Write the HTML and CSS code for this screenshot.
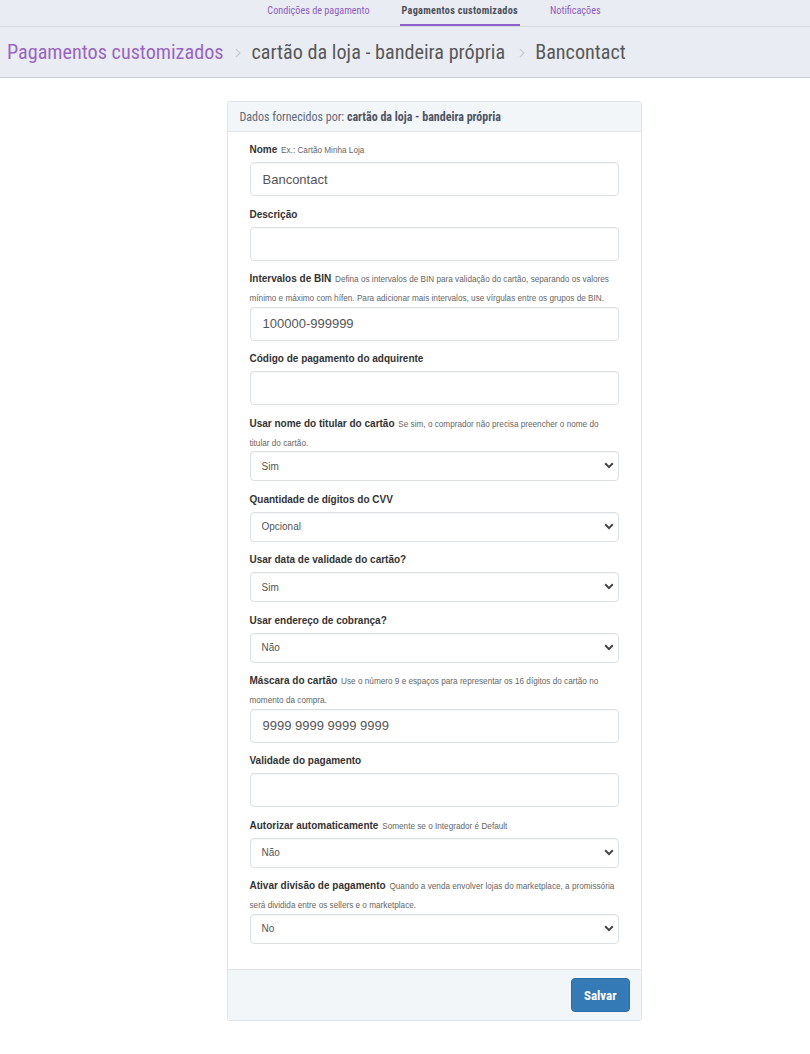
FILE: index.html
```html
<!DOCTYPE html>
<html lang="pt-BR">
<head>
<meta charset="utf-8">
<title>Pagamentos customizados - Bancontact</title>
<link rel="stylesheet" href="styles.css">
</head>
<body>
<nav class="tabs">
  <a class="tab" href="#">Condições de pagamento</a>
  <a class="tab tab-active" href="#">Pagamentos customizados</a>
  <a class="tab" href="#">Notificações</a>
</nav>
<header class="crumbs">
  <a class="crumb crumb-link" href="#">Pagamentos customizados</a>
  <svg class="crumb-sep" viewBox="0 0 6 10" width="6" height="10"><path d="M0.8 0.8 L5 5 L0.8 9.2" fill="none" stroke="#c4c8cf" stroke-width="1.1"/></svg>
  <span class="crumb">cartão da loja - bandeira própria</span>
  <svg class="crumb-sep" viewBox="0 0 6 10" width="6" height="10"><path d="M0.8 0.8 L5 5 L0.8 9.2" fill="none" stroke="#c4c8cf" stroke-width="1.1"/></svg>
  <span class="crumb">Bancontact</span>
</header>
<main class="page">
  <section class="card">
    <div class="card-head">Dados fornecidos por:&nbsp;<strong>cartão da loja - bandeira própria</strong></div>
    <form class="card-body">
      <div class="field">
        <label class="field-label">Nome <span class="hint">Ex.: Cartão Minha Loja</span></label>
        <input class="control" type="text" value="Bancontact">
      </div>
      <div class="field">
        <label class="field-label">Descrição</label>
        <input class="control" type="text" value="">
      </div>
      <div class="field">
        <label class="field-label field-label-wrap">Intervalos de BIN <span class="hint">Defina os intervalos de BIN para validação do cartão, separando os valores mínimo e máximo com hífen. Para adicionar mais intervalos, use vírgulas entre os grupos de BIN.</span></label>
        <input class="control" type="text" value="100000-999999">
      </div>
      <div class="field">
        <label class="field-label">Código de pagamento do adquirente</label>
        <input class="control" type="text" value="">
      </div>
      <div class="field">
        <label class="field-label field-label-wrap">Usar nome do titular do cartão <span class="hint">Se sim, o comprador não precisa preencher o nome do titular do cartão.</span></label>
        <div class="select-wrap">
          <select class="control control-select"><option selected>Sim</option><option>Não</option></select>
          <svg class="select-arrow" viewBox="0 0 10 7" width="10" height="7"><path d="M1.2 1.3 L5 5.1 L8.8 1.3" fill="none" stroke="#444" stroke-width="2"/></svg>
        </div>
      </div>
      <div class="field">
        <label class="field-label">Quantidade de dígitos do CVV</label>
        <div class="select-wrap">
          <select class="control control-select"><option selected>Opcional</option><option>3</option><option>4</option></select>
          <svg class="select-arrow" viewBox="0 0 10 7" width="10" height="7"><path d="M1.2 1.3 L5 5.1 L8.8 1.3" fill="none" stroke="#444" stroke-width="2"/></svg>
        </div>
      </div>
      <div class="field">
        <label class="field-label">Usar data de validade do cartão?</label>
        <div class="select-wrap">
          <select class="control control-select"><option selected>Sim</option><option>Não</option></select>
          <svg class="select-arrow" viewBox="0 0 10 7" width="10" height="7"><path d="M1.2 1.3 L5 5.1 L8.8 1.3" fill="none" stroke="#444" stroke-width="2"/></svg>
        </div>
      </div>
      <div class="field">
        <label class="field-label">Usar endereço de cobrança?</label>
        <div class="select-wrap">
          <select class="control control-select"><option>Sim</option><option selected>Não</option></select>
          <svg class="select-arrow" viewBox="0 0 10 7" width="10" height="7"><path d="M1.2 1.3 L5 5.1 L8.8 1.3" fill="none" stroke="#444" stroke-width="2"/></svg>
        </div>
      </div>
      <div class="field">
        <label class="field-label field-label-wrap">Máscara do cartão <span class="hint">Use o número 9 e espaços para representar os 16 dígitos do cartão no momento da compra.</span></label>
        <input class="control" type="text" value="9999 9999 9999 9999">
      </div>
      <div class="field">
        <label class="field-label">Validade do pagamento</label>
        <input class="control" type="text" value="">
      </div>
      <div class="field">
        <label class="field-label">Autorizar automaticamente <span class="hint">Somente se o Integrador é Default</span></label>
        <div class="select-wrap">
          <select class="control control-select"><option>Sim</option><option selected>Não</option></select>
          <svg class="select-arrow" viewBox="0 0 10 7" width="10" height="7"><path d="M1.2 1.3 L5 5.1 L8.8 1.3" fill="none" stroke="#444" stroke-width="2"/></svg>
        </div>
      </div>
      <div class="field">
        <label class="field-label field-label-wrap">Ativar divisão de pagamento <span class="hint">Quando a venda envolver lojas do marketplace, a promissória será dividida entre os sellers e o marketplace.</span></label>
        <div class="select-wrap">
          <select class="control control-select"><option>Yes</option><option selected>No</option></select>
          <svg class="select-arrow" viewBox="0 0 10 7" width="10" height="7"><path d="M1.2 1.3 L5 5.1 L8.8 1.3" fill="none" stroke="#444" stroke-width="2"/></svg>
        </div>
      </div>
    </form>
    <div class="card-foot">
      <button class="btn-primary" type="button">Salvar</button>
    </div>
  </section>
</main>
</body>
</html>
```

FILE: styles.css
```css
:root {
  --cond: "Roboto Condensed", "Liberation Sans", sans-serif;
  --bar-bg: #e9edf3;
  --purple: #9964c4;
  --card-line: #e1e5ea;
  --panel-bg: #f3f6f9;
}

* { box-sizing: border-box; }

body {
  margin: 0;
  background: #fff;
  color: #333;
  font-family: "Liberation Sans", Arial, sans-serif;
}

/* top tabs */
.tabs {
  display: flex;
  justify-content: center;
  gap: 28px;
  height: 27px;
  padding-left: 58px;
  background: var(--bar-bg);
  border-bottom: 1px solid #d6dbe2;
  font-family: var(--cond);
  font-size: 10.2px;
}

.tab {
  display: block;
  height: 26px;
  padding: 0 2px 2px;
  line-height: 22px;
  color: #8c5ac3;
  text-decoration: none;
  border-bottom: 2px solid transparent;
}

.tab-active {
  color: #4b505b;
  font-weight: bold;
  letter-spacing: 0.3px;
  border-bottom-color: #8f5fcb;
}

/* breadcrumb */
.crumbs {
  display: flex;
  align-items: center;
  height: 51px;
  padding-left: 7px;
  background: var(--bar-bg);
  border-bottom: 1px solid #c9ced6;
  font-family: var(--cond);
  font-size: 20.2px;
  color: #585858;
  white-space: nowrap;
}

.crumb { text-decoration: none; color: #585858; }
.crumb-link { color: var(--purple); }

.crumb-sep {
  flex: none;
  margin: 1px 10px 0 12px;
}

.crumb-sep + .crumb + .crumb-sep { margin-left: 14px; }

/* page */
.page {
  padding: 23px 0 40px 58px;
}

.card {
  width: 415px;
  margin: 0 auto;
  border: 1px solid var(--card-line);
  border-radius: 3px;
  background: #fff;
  overflow: hidden;
}

.card-head {
  display: flex;
  align-items: center;
  height: 30px;
  padding: 0 12px;
  background: var(--panel-bg);
  border-bottom: 1px solid var(--card-line);
  font-family: var(--cond);
  font-size: 12px;
  color: #5f6a7a;
  white-space: nowrap;
}

.card-head strong { color: #4e5563; }

.card-body {
  padding: 8px 22px 17px;
}

.field { margin-bottom: 8.5px; }

.field-label {
  display: block;
  margin-bottom: 3px;
  font-size: 10px;
  line-height: 19px;
  font-weight: bold;
  color: #333;
}

.field-label-wrap { margin-bottom: -0.5px; }

.hint {
  margin-left: 1px;
  font-size: 8.2px;
  line-height: 10px;
  font-weight: normal;
  color: #666;
}

.control {
  display: block;
  width: 100%;
  height: 34px;
  padding: 0 12px;
  border: 1px solid #dce1e7;
  border-radius: 4px;
  background: #fff;
  box-shadow: inset 0 1px 1px rgba(0, 0, 0, 0.04);
  font-family: "Liberation Sans", Arial, sans-serif;
  font-size: 13px;
  color: #555;
  outline: none;
}

.select-wrap { position: relative; }

.control-select {
  height: 30px;
  padding: 0 24px 0 11px;
  font-size: 10px;
  -webkit-appearance: none;
  appearance: none;
}

.select-arrow {
  position: absolute;
  right: 5px;
  top: 11px;
  pointer-events: none;
}

.card-foot {
  display: flex;
  justify-content: flex-end;
  padding: 8px 11px 8px;
  background: var(--panel-bg);
  border-top: 1px solid var(--card-line);
}

.btn-primary {
  height: 34px;
  padding: 0 12px;
  border: 1px solid #2e6da4;
  border-radius: 4px;
  background: #337ab7;
  color: #fff;
  font-family: var(--cond);
  font-size: 13px;
  font-weight: bold;
  cursor: pointer;
}
```
